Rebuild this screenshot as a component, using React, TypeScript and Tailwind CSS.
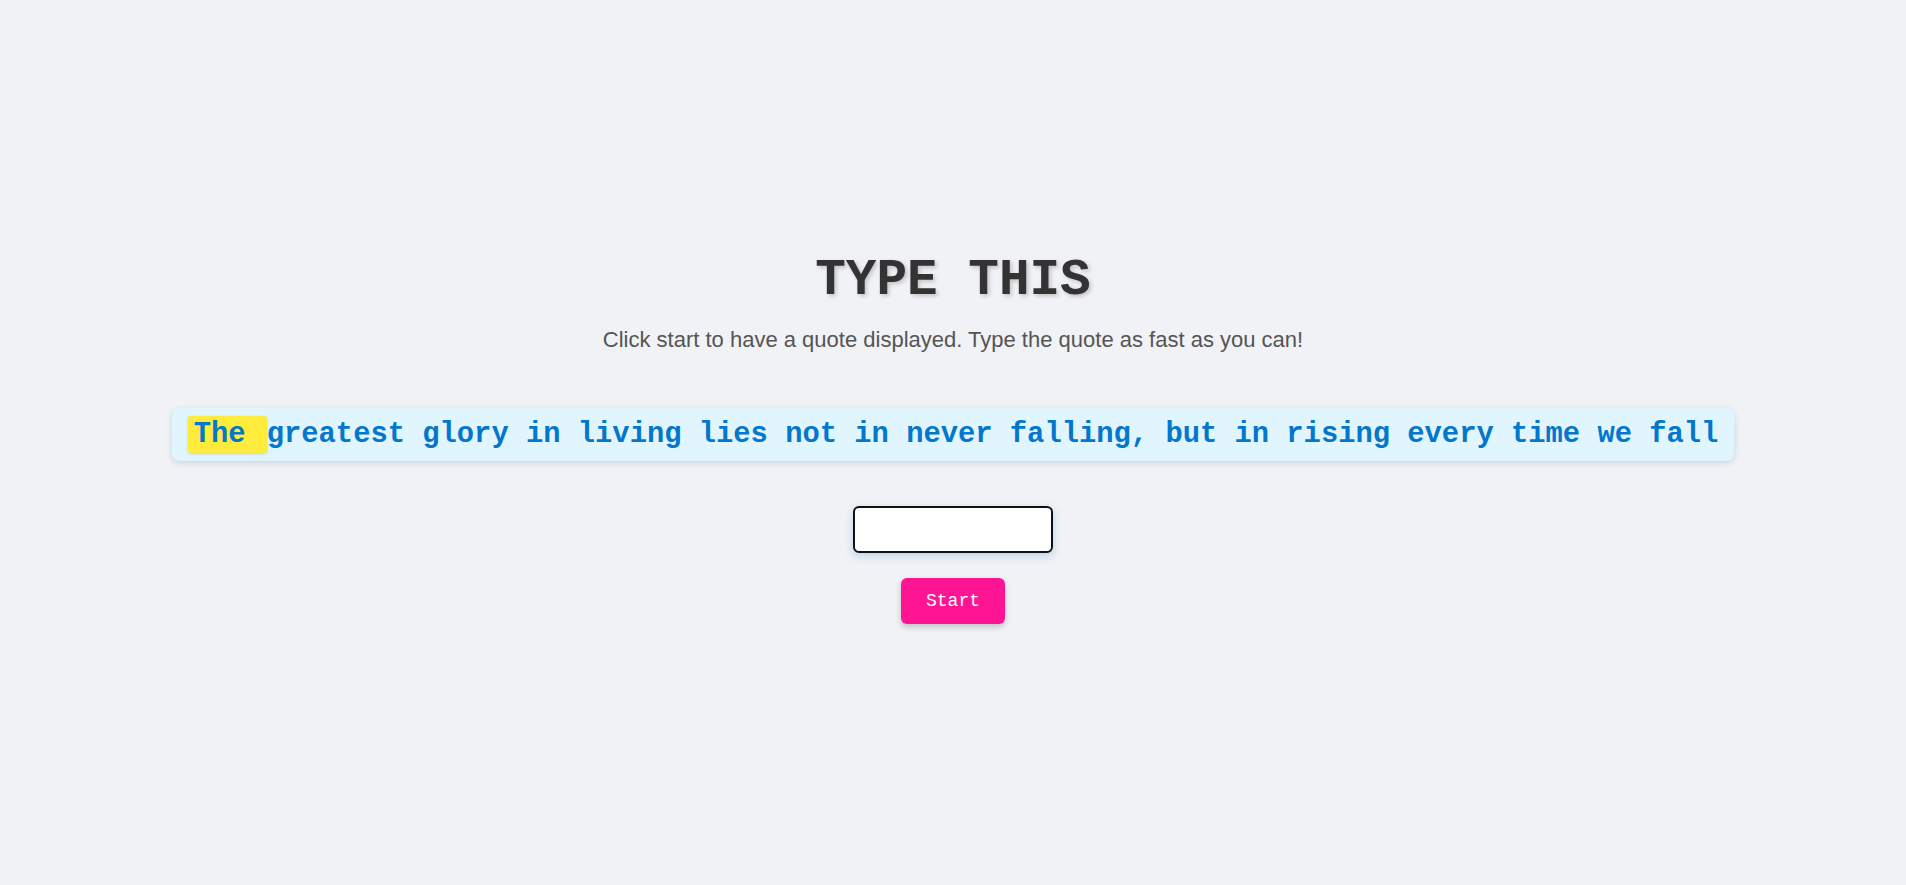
import React from 'react';

const quote = "The greatest glory in living lies not in never falling, but in rising every time we fall";

export default function App() {
  const words = quote.split(' ');

  return (
    <div className="min-h-screen w-full bg-[#f0f2f5] flex flex-col items-center pt-[252px]">
      <h1 className="font-['Liberation_Mono',monospace] font-bold text-[51px] leading-[58px] text-[#333] [text-shadow:2px_2px_4px_rgba(0,0,0,0.2)]">
        TYPE THIS
      </h1>
      <p className="mt-[17px] font-['Liberation_Sans',Arial,sans-serif] text-[22px] leading-[25px] text-[#555]">
        Click start to have a quote displayed. Type the quote as fast as you can!
      </p>

      <div className="mt-14 px-[16px] py-[10px] bg-[#e1f5fe] rounded-lg shadow-[0_2px_6px_rgba(0,90,160,0.18)]">
        <p className="font-['Liberation_Mono',monospace] font-bold text-[28.8px] leading-[33px] text-[#0277cc] whitespace-nowrap">
          {words.map((w, i) => (
            <span
              key={i}
              className={i === 0 ? 'bg-[#ffeb3b] rounded-[3px] pl-[6px] pr-1 py-[2px] shadow-[0_1px_3px_rgba(0,0,0,0.15)]' : ''}
            >
              {w + (i < words.length - 1 ? ' ' : '')}
            </span>
          ))}
        </p>
      </div>

      <input
        type="text"
        className="mt-[45px] w-[200px] h-[47px] bg-white border-2 border-[#111] rounded-md outline-none px-2 shadow-[0_3px_8px_rgba(2,119,204,0.25)]"
      />

      <button className="mt-[25px] w-[104px] h-[46px] bg-[#ff1493] text-white rounded-md font-['Liberation_Mono',monospace] text-[18px] shadow-[0_3px_6px_rgba(0,0,0,0.2)]">
        Start
      </button>
    </div>
  );
}
